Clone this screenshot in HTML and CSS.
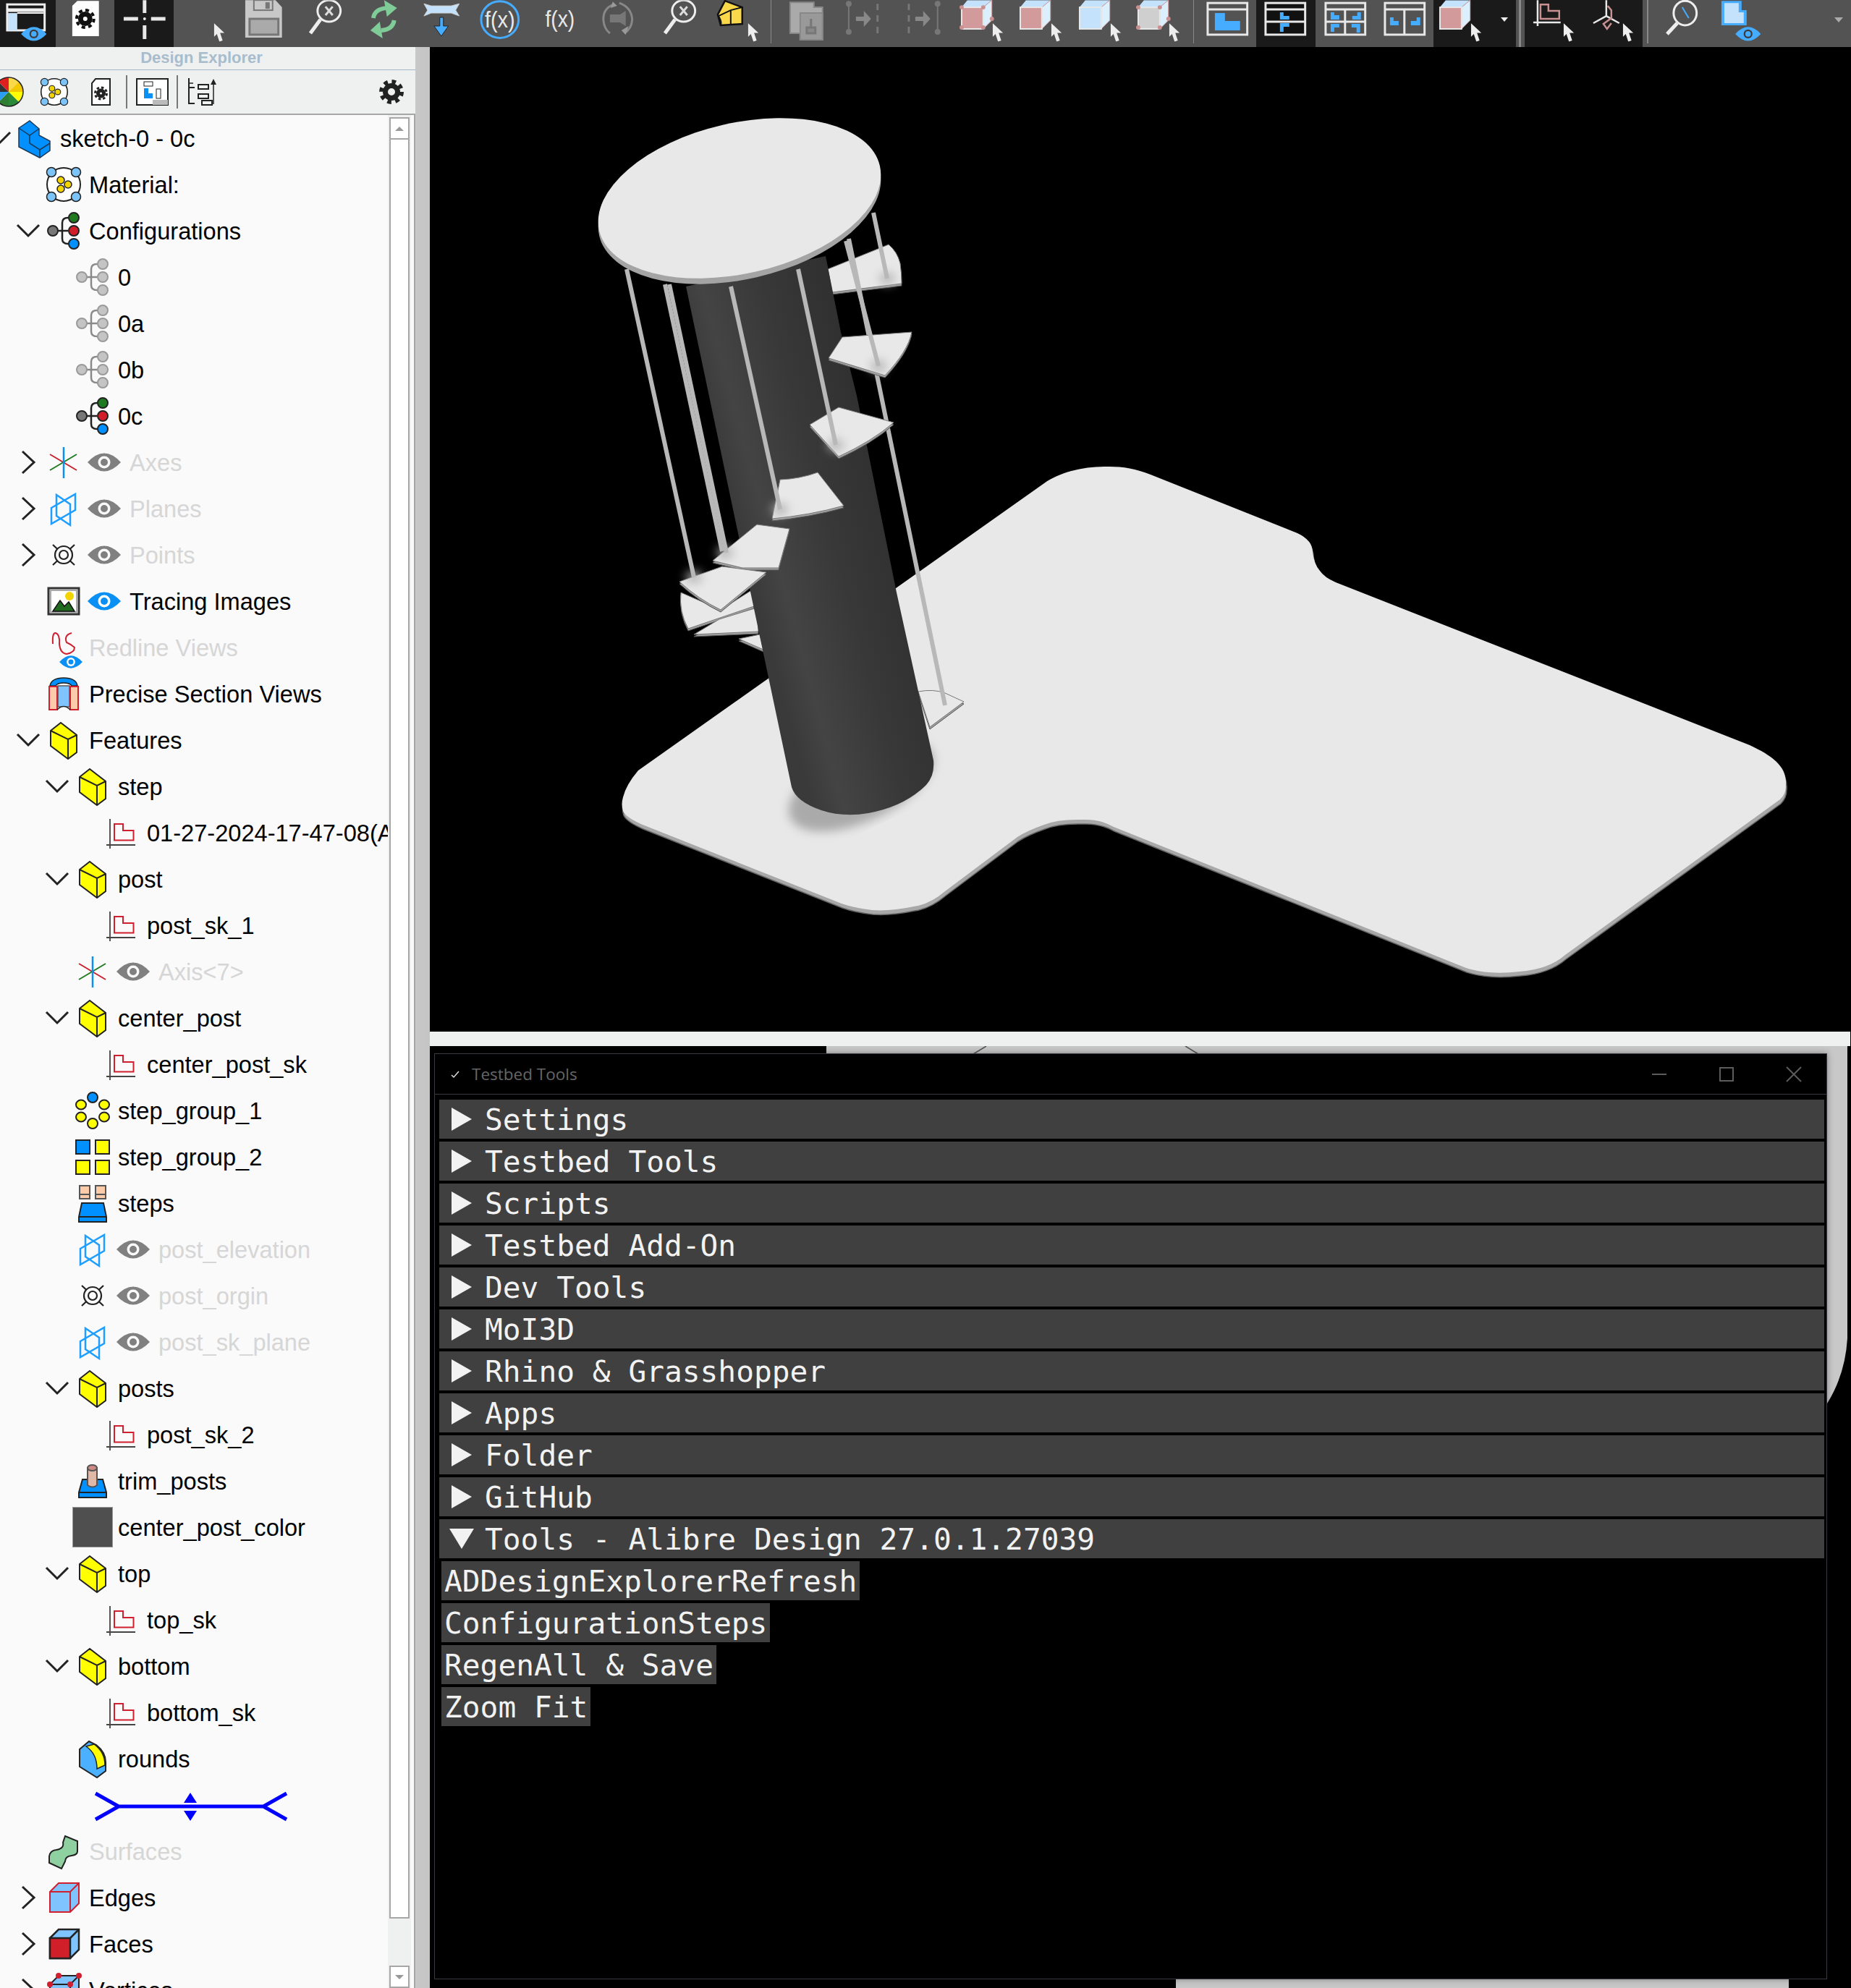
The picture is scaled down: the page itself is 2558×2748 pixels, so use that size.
FILE: index.html
```html
<!DOCTYPE html>
<html lang="en">
<head>
    <meta charset="UTF-8">
    <title>Alibre Design - Testbed Tools</title>
    <link rel="stylesheet" href="styles.css">
</head>
<body>
    <!-- Shared icons -->
    <svg class="defs" width="0" height="0">
        <defs>
            <linearGradient id="post-grad" gradientUnits="userSpaceOnUse" x1="1010" y1="700" x2="1230" y2="640">
                <stop offset="0" stop-color="#3a3a3a"/>
                <stop offset="0.18" stop-color="#444444"/>
                <stop offset="0.55" stop-color="#383838"/>
                <stop offset="1" stop-color="#2f2f2f"/>
            </linearGradient>
            <filter id="soft"><feGaussianBlur stdDeviation="7"/></filter>
            <path id="plate" d="M1443 668C1465 652 1500 644 1533 645 1552 645 1570 648 1590 656L1793 737Q1814 747 1814 763 1816 780 1824 789 1830 798 1846 805L2418 1030C2450 1045 2470 1060 2468 1085 2468 1095 2465 1100 2460 1105L2163 1320Q2140 1340 2100 1343 2056 1348 2026 1338L1539 1143Q1520 1132 1496 1133 1462 1132 1443 1140 1420 1148 1406 1157L1306 1232Q1285 1250 1263 1253 1230 1260 1205 1258 1180 1255 1163 1249L888 1140Q865 1130 861 1121 858 1112 861 1102 865 1085 882 1065Z"/>
            <g id="steps-back">
                <path d="M1269 956Q1290 952 1306 958L1332 970 1285 1005Z"/>
                <path d="M1021 883L1050 877 1055 898Z"/>
                <path d="M959 877L994 856 1046 840 1048 873Z"/>
                <path d="M941 819Q938 845 951 869L1042 838 1040 815 996 843Z"/>
                <path d="M1144 372L1228 338Q1240 348 1244 364 1246 378 1246 392L1150 404Z"/>
            </g>
            <g id="steps-front">
                <path d="M1145 495L1164 466 1260 459Q1255 485 1223 519Z"/>
                <path d="M1119 587L1159 563 1235 584Q1205 610 1159 631Z"/>
                <path d="M1067 717L1078 663Q1105 662 1130 653L1166 699Q1120 712 1067 717Z"/>
                <path d="M985 775L1046 725 1091 731 1076 785 1026 785Z"/>
                <path d="M939 804L998 783 1059 791 996 843Q965 828 939 804Z"/>
            </g>
        </defs>
        <symbol id="cur" viewBox="0 0 16 26"><path d="M0 0V19L4 15 7.500 25.500 12 24 8.500 13.500H14.500Z" fill="#eee"/></symbol>
        <symbol id="chev-down" viewBox="0 0 40 40"><path d="M5 12L20 27 35 12" fill="none" stroke="#222" stroke-width="3"/></symbol>
        <symbol id="chev-right" viewBox="0 0 40 40"><path d="M12 5L28 20 12 35" fill="none" stroke="#222" stroke-width="3"/></symbol>
        <symbol id="eye-gray" viewBox="0 0 46 26"><path d="M0 13Q23-12 46 13 23 38 0 13Z" fill="#808080"/><circle cx="23" cy="13" r="8.500" fill="#fafafa"/><circle cx="23" cy="13" r="5" fill="#808080"/></symbol>
        <symbol id="eye-blue" viewBox="0 0 46 26"><path d="M0 13Q23-12 46 13 23 38 0 13Z" fill="#0a90f5"/><circle cx="23" cy="13" r="8.500" fill="#fff"/><circle cx="23" cy="13" r="5" fill="#0a90f5"/></symbol>
        <symbol id="eye-tb" viewBox="0 0 46 26"><path d="M0 13Q23-12 46 13 23 38 0 13Z" fill="#45acff"/><ellipse cx="23" cy="13" rx="8" ry="8" fill="#3c3c3c"/><ellipse cx="23" cy="13" rx="5" ry="5" fill="#45acff"/></symbol>

        <symbol id="i-part" viewBox="0 0 58 58"><path d="M7 15L22 5 35 16V25L50 33V46L36 56 7 41Z" fill="#0090ff" stroke="#1c3a58" stroke-width="1.500"/><path d="M7 15L22 25 35 16M22 25V36L36 45 50 36M36 45V56" fill="none" stroke="#1c3a58" stroke-width="1.500"/></symbol>
        <symbol id="i-material" viewBox="0 0 58 58"><circle cx="29" cy="29" r="23" fill="#fff" stroke="#222" stroke-width="2"/><g fill="#7cc4f8" stroke="#222" stroke-width="1.500"><circle cx="12" cy="12" r="6.500"/><circle cx="46" cy="12" r="6.500"/><circle cx="12" cy="46" r="6.500"/><circle cx="46" cy="46" r="6.500"/></g><g fill="#f3d400" stroke="#222" stroke-width="1.500"><circle cx="25" cy="23" r="5"/><circle cx="35" cy="29" r="5"/><circle cx="25" cy="35" r="5"/></g></symbol>
        <symbol id="i-config" viewBox="0 0 58 58"><path d="M14 29H35M43 11H35Q27 11 27 18V40Q27 47 35 47H43" fill="none" stroke="#222" stroke-width="2.500"/><ellipse cx="14" cy="29" rx="7" ry="7" fill="#777" stroke="#222" stroke-width="2"/><ellipse cx="43" cy="11" rx="7" ry="7" fill="#1f7a1f" stroke="#222" stroke-width="2"/><ellipse cx="43" cy="29" rx="7" ry="7" fill="#d01f28" stroke="#222" stroke-width="2"/><ellipse cx="43" cy="47" rx="7" ry="7" fill="#0090ff" stroke="#222" stroke-width="2"/></symbol>
        <symbol id="i-config-off" viewBox="0 0 58 58"><path d="M14 29H35M43 11H35Q27 11 27 18V40Q27 47 35 47H43" fill="none" stroke="#8a8a8a" stroke-width="2.500"/><g fill="#c4c4c4" stroke="#9a9a9a" stroke-width="2"><ellipse cx="14" cy="29" rx="7" ry="7"/><ellipse cx="43" cy="11" rx="7" ry="7"/><ellipse cx="43" cy="29" rx="7" ry="7"/><ellipse cx="43" cy="47" rx="7" ry="7"/></g></symbol>
        <symbol id="i-axes" viewBox="0 0 58 58"><path d="M10 18L47 40" stroke="#c8202c" stroke-width="2"/><path d="M10 40L47 18" stroke="#1f7a1f" stroke-width="2"/><path d="M29 8V51" stroke="#0a90f5" stroke-width="2.500"/></symbol>
        <symbol id="i-planes" viewBox="0 0 58 58"><g fill="none" stroke="#1e9fff" stroke-width="2.500"><path d="M12 28L45 9V31L12 50Z"/><path d="M19 10L38 23V52L19 39Z"/></g></symbol>
        <symbol id="i-origin" viewBox="0 0 58 58"><g fill="none" stroke="#222" stroke-width="2.200"><path d="M14 15L44 43M44 15L14 43"/><circle cx="29" cy="29" r="12" fill="#fafafa"/><circle cx="29" cy="29" r="6"/></g></symbol>
        <symbol id="i-image" viewBox="0 0 58 58"><rect x="8" y="11" width="42" height="36" fill="#fff" stroke="#333" stroke-width="3"/><rect x="11" y="14" width="36" height="30" fill="none" stroke="#aaa" stroke-width="2"/><circle cx="37" cy="22" r="6" fill="#f3d400"/><path d="M14 43L24 28 30 36 36 30 44 43Z" fill="#1f6a1f" stroke="#111" stroke-width="1.500"/></symbol>
        <symbol id="i-redline" viewBox="0 0 58 58"><path d="M14 24Q13 8 18 9 24 11 23 24 24 37 33 38 44 36 44 29 38 24 33 22 29 12 40 9" fill="none" stroke="#d02030" stroke-width="2"/><use href="#eye-blue" x="23" y="40" width="32" height="18"/></symbol>
        <symbol id="i-section" viewBox="0 0 58 58"><path d="M10 18Q12 7 29 7 46 7 48 18H40Q38 14 29 14 20 14 18 18Z" fill="#0090ff" stroke="#222" stroke-width="1.500"/><path d="M21 18H37V47H21Z" fill="#80c4ff" stroke="#555" stroke-width="1.500"/><path d="M9 19H20V51H9ZM38 19H49V51H38Z" fill="#fccbaa" stroke="#d02030" stroke-width="2"/><path d="M20 51Q29 42 38 51" fill="#fff" stroke="#222" stroke-width="1.500"/></symbol>
        <symbol id="i-feature" viewBox="0 0 58 58"><path d="M11 16L25 5 47 22V46L35 55 11 37Z" fill="#ff0" stroke="#222" stroke-width="2"/><path d="M11 16L35 28 47 22M35 28V55" fill="none" stroke="#222" stroke-width="2"/></symbol>
        <symbol id="i-sketch" viewBox="0 0 58 58"><path d="M13 10V51M8 46H48" stroke="#444" stroke-width="1.800"/><path d="M19 17H31V26H45.500V39.500H19Z" fill="none" stroke="#d02030" stroke-width="2"/></symbol>
        <symbol id="i-pat-circle" viewBox="0 0 58 58"><g fill="#ff0" stroke="#222" stroke-width="2"><ellipse cx="29" cy="11" rx="7" ry="7" fill="#0090ff"/><ellipse cx="13" cy="21" rx="7" ry="6.500"/><ellipse cx="45" cy="21" rx="7" ry="6.500"/><ellipse cx="13" cy="38" rx="7" ry="6.500"/><ellipse cx="45" cy="38" rx="7" ry="6.500"/><ellipse cx="29" cy="47" rx="7" ry="7"/></g></symbol>
        <symbol id="i-pat-rect" viewBox="0 0 58 58"><g fill="#ff0" stroke="#222" stroke-width="2"><rect x="6" y="6" width="19" height="19" fill="#0090ff"/><rect x="33" y="6" width="19" height="19"/><rect x="6" y="34" width="19" height="19"/><rect x="33" y="34" width="19" height="19"/></g></symbol>
        <symbol id="i-steps" viewBox="0 0 58 58"><g fill="#fccbaa" stroke="#555" stroke-width="2"><rect x="11" y="5" width="14" height="18"/><rect x="33" y="5" width="14" height="18"/></g><path d="M11 17H25M33 17H47" stroke="#555" stroke-width="2"/><path d="M14 29H44L48 48V55H10V48Z" fill="#0090ff" stroke="#222" stroke-width="2"/><path d="M10 48H48" stroke="#222" stroke-width="2"/></symbol>
        <symbol id="i-trim" viewBox="0 0 58 58"><path d="M15 27H43L48 45V52H10V45Z" fill="#0090ff" stroke="#222" stroke-width="2"/><path d="M10 45H48" stroke="#222" stroke-width="2"/><path d="M22 11V35Q29 40 35 35V11Z" fill="#e0b8a8" stroke="#555" stroke-width="2"/><ellipse cx="28.500" cy="11" rx="6.500" ry="4" fill="#d08a86" stroke="#555" stroke-width="2"/></symbol>
        <symbol id="i-round" viewBox="0 0 58 58"><path d="M11 16L24 5 34 10Q47 20 47 34V46L35 55 11 40Z" fill="#4ab0ff" stroke="#222" stroke-width="2"/><path d="M20 12L31 9Q46 20 46 38L35 43Q35 22 20 12Z" fill="#ff0" stroke="#222" stroke-width="1.500"/></symbol>
        <symbol id="i-surface" viewBox="0 0 58 58"><path d="M31 8L48 15V29Q48 34 40 35 31 36 31 43L26 53 9 45V36Q10 28 19 27 30 25 28 17Z" fill="#8fd0a0" stroke="#222" stroke-width="2"/></symbol>
        <symbol id="i-edges" viewBox="0 0 58 58"><path d="M10 21L22 9H50V37L38 49H10Z" fill="#80c4ff" stroke="#d02030" stroke-width="2"/><path d="M10 21H38V49M38 21L50 9" fill="none" stroke="#d02030" stroke-width="2"/></symbol>
        <symbol id="i-faces" viewBox="0 0 58 58"><path d="M10 21L22 9H50V37L38 49H10Z" fill="#80c4ff" stroke="#222" stroke-width="2.500"/><path d="M10 21H38V49H10Z" fill="#d01f28" stroke="#222" stroke-width="2.500"/><path d="M38 21L50 9" stroke="#222" stroke-width="2.500"/></symbol>
        <symbol id="i-vertices" viewBox="0 0 58 58"><path d="M10 21L22 9H50V37L38 49H10Z" fill="#80c4ff" stroke="#222" stroke-width="2"/><path d="M10 21H38V49M38 21L50 9" fill="none" stroke="#222" stroke-width="2"/><g fill="#d02030"><circle cx="22" cy="9" r="4"/><circle cx="50" cy="9" r="4"/><circle cx="10" cy="21" r="4"/><circle cx="38" cy="21" r="4"/></g></symbol>

        <symbol id="t-mag" viewBox="0 0 82 65"><ellipse cx="52" cy="15" rx="16" ry="15" fill="none" stroke="#eee" stroke-width="3"/><path d="M40 27L26 46" stroke="#eee" stroke-width="5"/><path d="M47 9L57 21M57 9L47 21" stroke="#ddd" stroke-width="3"/></symbol>
        <symbol id="t-box" viewBox="0 0 82 65"><path d="M9 10L17 0H51L39 10Z" fill="#c4e2fb"/><path d="M39 10L51 0V28L39 40Z" fill="#dceffd" stroke="#d09a9a"/><rect x="9" y="10" width="30" height="30" fill="currentColor" stroke="#e8e8e8" stroke-width="2"/></symbol>
        <symbol id="t-dots" viewBox="0 0 82 65"><g fill="#c89090"><circle cx="9" cy="10" r="3"/><circle cx="39" cy="10" r="3"/><circle cx="51" cy="26" r="3"/><circle cx="9" cy="38" r="3"/><circle cx="39" cy="38" r="3"/></g></symbol>
    </svg>

    <!-- Top toolbar -->
    <div class="toolbar">
        <svg class="tb tb-on tb-first" viewBox="0 0 82 65"><rect x="15" y="6" width="52" height="36" fill="none" stroke="#eee" stroke-width="3"/><path d="M15 14H67" stroke="#eee" stroke-width="5"/><rect x="16" y="18" width="13" height="24" fill="#c4e2fb"/><path d="M29 18H66" stroke="#eee" stroke-width="2"/><use href="#eye-tb" x="34" y="37" width="36" height="20"/></svg>
        <svg class="tb" viewBox="0 0 82 65"><path d="M23 8L30 1H60V50H23Z" fill="#fff"/><circle cx="41" cy="26" r="6.500" fill="none" stroke="#111" stroke-width="7"/><circle cx="41" cy="26" r="12" fill="none" stroke="#111" stroke-width="4" stroke-dasharray="5 4.400"/></svg>
        <svg class="tb tb-on" viewBox="0 0 82 65"><path d="M42 0V18M42 35V54M13 26H33M51 26H71" stroke="#e8e8e8" stroke-width="5"/><circle cx="42" cy="26" r="2" fill="#e8e8e8"/></svg>
        <svg class="tb" viewBox="0 0 82 65"><use href="#cur" x="56" y="32" width="16" height="26"/></svg>
        <svg class="tb" viewBox="0 0 82 65"><path d="M18 0H60L69 10V52H18Z" fill="#c8c8c8"/><rect x="30" y="0" width="26" height="14" fill="#c8c8c8" stroke="#777" stroke-width="2"/><rect x="46" y="3" width="6" height="9" fill="#777"/><rect x="24" y="26" width="40" height="22" fill="#aaa" stroke="#777" stroke-width="3"/></svg>
        <svg class="tb" viewBox="0 0 82 65"><use href="#t-mag"/></svg>
        <svg class="tb" viewBox="0 0 82 65"><g fill="#80cc99"><path d="M46 0L64 11 50 23Z"/><path d="M44 53L27 42 40 30Z"/></g><g fill="none" stroke="#80cc99" stroke-width="6"><path d="M31 25Q33 12 50 11"/><path d="M60 28Q58 41 42 42"/></g></svg>
        <svg class="tb" viewBox="0 0 82 65"><path d="M20 5L30 8H58L69 5 64 14 69 22 58 18H30L20 22 25 14Z" fill="#c4e2fb" stroke="#ccc"/><path d="M42 24H47V36H54L44 50 34 36H42Z" fill="#45acff" stroke="#222"/></svg>
        <svg class="tb" viewBox="0 0 82 65"><ellipse cx="43" cy="27" rx="26" ry="25.500" fill="none" stroke="#45acff" stroke-width="3"/><text class="fx" x="43" y="38" text-anchor="middle" textLength="42" lengthAdjust="spacingAndGlyphs">f(x)</text></svg>
        <svg class="tb" viewBox="0 0 82 65"><text class="fx" x="45" y="37" text-anchor="middle" textLength="41" lengthAdjust="spacingAndGlyphs">f(x)</text></svg>
        <svg class="tb" viewBox="0 0 82 65"><g fill="none" stroke="#888" stroke-width="3"><path d="M37 6Q22 12 23 28 24 40 32 46"/><path d="M45 4Q62 10 63 27 62 40 52 46"/></g><path d="M32 20H46L54 15V36L46 31H32Z" fill="#777"/><path d="M58 36L54 48 48 42ZM36 2L42 8 33 11Z" fill="#999"/></svg>
        <svg class="tb" viewBox="0 0 82 65"><use href="#t-mag"/></svg>
        <svg class="tb" viewBox="0 0 82 65"><path d="M18 20L28 1 52 10V33L22 35Z" fill="#fbd84a" stroke="#111" stroke-width="2.500"/><path d="M19 22L36 14 52 10M36 14L36 34M19 22Q24 30 22 35" fill="none" stroke="#111" stroke-width="2"/><use href="#cur" x="60" y="32" width="16" height="26"/></svg>
        <div class="tb-sep"></div>
        <svg class="tb" viewBox="0 0 82 65"><g fill="#aaa" stroke="#888" stroke-width="2"><path d="M17 3H50V10H62V55H31V46H17Z"/><path d="M31 18H62V55H31Z" fill="#999"/></g><path d="M46 26V38M40 38H52V46H40Z" fill="#888" stroke="#777" stroke-width="3"/></svg>
        <svg class="tb" viewBox="0 0 82 65"><path d="M17 5V46" stroke="#777" stroke-width="2"/><path d="M57 5V46" stroke="#777" stroke-width="3" stroke-dasharray="9 7"/><circle cx="17" cy="5" r="4" fill="#777"/><circle cx="17" cy="44" r="4" fill="#777"/><path d="M27 23H38V15L48 26 38 37V29H27Z" fill="#888"/></svg>
        <svg class="tb" viewBox="0 0 82 65"><path d="M18 5V46" stroke="#777" stroke-width="3" stroke-dasharray="9 7"/><path d="M58 5V46" stroke="#777" stroke-width="2"/><circle cx="58" cy="5" r="4" fill="#777"/><circle cx="58" cy="44" r="4" fill="#777"/><path d="M27 23H38V15L48 26 38 37V29H27Z" fill="#888"/></svg>
        <svg class="tb tb-pink" viewBox="0 0 82 65"><use href="#t-box"/><use href="#t-dots"/><use href="#cur" x="52" y="32" width="16" height="26"/></svg>
        <svg class="tb tb-pink" viewBox="0 0 82 65"><use href="#t-box"/><use href="#cur" x="52" y="32" width="16" height="26"/></svg>
        <svg class="tb tb-ice" viewBox="0 0 82 65"><use href="#t-box"/><use href="#cur" x="52" y="32" width="16" height="26"/></svg>
        <svg class="tb tb-gray" viewBox="0 0 82 65"><use href="#t-box"/><use href="#t-dots"/><use href="#cur" x="52" y="32" width="16" height="26"/></svg>
        <div class="tb-sep tb-sep-thin"></div>
        <svg class="tb" viewBox="0 0 82 65"><rect x="14" y="4" width="55" height="44" fill="none" stroke="#e8e8e8" stroke-width="3"/><path d="M14 13H69" stroke="#e8e8e8" stroke-width="3"/><path d="M24 18H38V29H59V42H24Z" fill="#45acff"/></svg>
        <svg class="tb tb-on" viewBox="0 0 82 65"><rect x="13" y="4" width="55" height="44" fill="#111" stroke="#e8e8e8" stroke-width="3"/><path d="M13 13H68M13 30H68" stroke="#e8e8e8" stroke-width="3"/><path d="M33 17H38V22H46V27H33ZM33 32H46V37H38V44H33Z" fill="#45acff"/></svg>
        <svg class="tb" viewBox="0 0 82 65"><rect x="14" y="4" width="55" height="44" fill="none" stroke="#e8e8e8" stroke-width="3"/><path d="M14 13H69M14 30H69M41 13V48" stroke="#e8e8e8" stroke-width="3"/><path d="M21 17H26V21H33V27H21ZM51 27H63V17H58V22H51ZM21 33H33V38H26V44H21ZM50 33H62V45H57V38H50Z" fill="#45acff"/></svg>
        <svg class="tb" viewBox="0 0 82 65"><rect x="14" y="4" width="55" height="44" fill="none" stroke="#e8e8e8" stroke-width="3"/><path d="M14 13H69M41 13V48" stroke="#e8e8e8" stroke-width="3"/><path d="M21 24H26V29H33V35H21ZM50 35H63V24H58V29H50Z" fill="#45acff"/></svg>
        <svg class="tb tb-on tb-pink" viewBox="0 0 82 65"><use href="#t-box"/><use href="#cur" x="52" y="32" width="16" height="26"/></svg>
        <div class="tb-drop tb-on"><div class="tb-arrow"></div></div>
        <div class="tb-sep tb-sep-fat"></div>
        <svg class="tb tb-on" viewBox="0 0 82 65"><path d="M18 0V36M12 31H50" stroke="#e8e8e8" stroke-width="2.500"/><path d="M22 6H33V15H48V26H22Z" fill="none" stroke="#c89090" stroke-width="2.500"/><use href="#cur" x="54" y="32" width="16" height="26"/></svg>
        <svg class="tb tb-on" viewBox="0 0 82 65"><path d="M32 0V22M32 22L14 32M32 22L50 32" fill="none" stroke="#e8e8e8" stroke-width="2.500"/><path d="M34 8L39 14V25L28 33 33 40 39 32" fill="none" stroke="#c89090" stroke-width="2.500"/><use href="#cur" x="55" y="32" width="16" height="26"/></svg>
        <div class="tb-sep tb-sep-mid"></div>
        <svg class="tb" viewBox="0 0 82 65"><ellipse cx="47" cy="18" rx="16" ry="17" fill="none" stroke="#eee" stroke-width="3"/><path d="M36 32L22 47" stroke="#eee" stroke-width="5"/><path d="M43 10L52 25" stroke="#45acff" stroke-width="2"/></svg>
        <svg class="tb" viewBox="0 0 82 65"><path d="M15 1H43V14H50V35H15Z" fill="#45acff"/><path d="M19 4H39V17H46V32H19Z" fill="#c4e2fb"/><use href="#eye-tb" x="34" y="37" width="36" height="20"/></svg>
        <div class="tb-end"><div class="tb-arrow tb-arrow-gray"></div></div>
    </div>

    <div class="app-container">
        <!-- Design Explorer -->
        <div class="sidebar">
            <div class="panel">
                <div class="de-title">Design Explorer</div>
                <div class="de-tools">
                    <svg class="de-wheel" width="42" height="42" viewBox="0 0 42 42"><path d="M21 21L21 1A20 20 0 0 1 35 7Z" fill="#fbd84a"/><path d="M21 21L35 7A20 20 0 0 1 41 21Z" fill="#f3c800"/><path d="M21 21L41 21A20 20 0 0 1 35 35Z" fill="#ff0"/><path d="M21 21L35 35A20 20 0 0 1 21 41Z" fill="#2a8a3a"/><path d="M21 21L21 41A20 20 0 0 1 7 35Z" fill="#2f7d32"/><path d="M21 21L7 35A20 20 0 0 1 1 21Z" fill="#2a9df4"/><path d="M21 21L1 21A20 20 0 0 1 7 7Z" fill="#333"/><path d="M21 21L7 7A20 20 0 0 1 21 1Z" fill="#e02020"/><circle cx="21" cy="21" r="20" fill="none" stroke="#222" stroke-width="1.500"/></svg>
                    <svg class="de-material" width="46" height="46" viewBox="0 0 58 58"><use href="#i-material"/></svg>
                    <svg class="de-doc" width="27" height="38" viewBox="0 0 27 38"><path d="M6 1H26V37H1V7Z" fill="#fff" stroke="#222" stroke-width="2"/><circle cx="13.500" cy="21" r="4" fill="none" stroke="#222" stroke-width="5"/><circle cx="13.500" cy="21" r="8" fill="none" stroke="#222" stroke-width="3" stroke-dasharray="3.500 2.800"/></svg>
                    <div class="de-sep"></div>
                    <svg class="de-layout" width="45" height="38" viewBox="0 0 45 38"><rect x="1" y="1" width="43" height="36" fill="#fff" stroke="#222" stroke-width="2"/><rect x="11" y="5" width="12" height="6" fill="none" stroke="#222"/><path d="M11 14H17V21H23V28H11Z" fill="#0a90f5"/><rect x="28" y="15" width="6" height="13" fill="none" stroke="#222"/><rect x="23" y="30" width="21" height="7" fill="#bbb"/></svg>
                    <div class="de-sep"></div>
                    <svg class="de-tree" width="42" height="40" viewBox="0 0 42 40"><g fill="none" stroke="#222" stroke-width="2"><path d="M2 1V36H10M2 14H10"/><rect x="15" y="10" width="14" height="6"/><rect x="15" y="23" width="14" height="6"/><rect x="20" y="32" width="14" height="6"/></g><path d="M2 8H8M36 6V37" stroke="#222" stroke-width="1.500"/><path d="M32 10L36 2 40 10Z" fill="#222"/></svg>
                    <svg class="de-gear" width="36" height="36" viewBox="0 0 36 36"><circle cx="18" cy="18" r="8.500" fill="none" stroke="#222" stroke-width="7"/><circle cx="18" cy="18" r="14" fill="none" stroke="#222" stroke-width="6" stroke-dasharray="5.500 5.500"/></svg>
                </div>
                <div class="tree-wrap">
                    <div class="tree">
                        <div class="row lv0"><svg class="chev"><use href="#chev-down"/></svg><svg class="ico"><use href="#i-part"/></svg><span class="lbl">sketch-0 - 0c</span></div>
                        <div class="row lv1"><span class="chev"></span><svg class="ico"><use href="#i-material"/></svg><span class="lbl">Material:</span></div>
                        <div class="row lv1"><svg class="chev"><use href="#chev-down"/></svg><svg class="ico"><use href="#i-config"/></svg><span class="lbl">Configurations</span></div>
                        <div class="row lv2"><span class="chev"></span><svg class="ico"><use href="#i-config-off"/></svg><span class="lbl">0</span></div>
                        <div class="row lv2"><span class="chev"></span><svg class="ico"><use href="#i-config-off"/></svg><span class="lbl">0a</span></div>
                        <div class="row lv2"><span class="chev"></span><svg class="ico"><use href="#i-config-off"/></svg><span class="lbl">0b</span></div>
                        <div class="row lv2"><span class="chev"></span><svg class="ico"><use href="#i-config"/></svg><span class="lbl">0c</span></div>
                        <div class="row lv1"><svg class="chev"><use href="#chev-right"/></svg><svg class="ico"><use href="#i-axes"/></svg><svg class="eye"><use href="#eye-gray"/></svg><span class="lbl off">Axes</span></div>
                        <div class="row lv1"><svg class="chev"><use href="#chev-right"/></svg><svg class="ico"><use href="#i-planes"/></svg><svg class="eye"><use href="#eye-gray"/></svg><span class="lbl off">Planes</span></div>
                        <div class="row lv1"><svg class="chev"><use href="#chev-right"/></svg><svg class="ico"><use href="#i-origin"/></svg><svg class="eye"><use href="#eye-gray"/></svg><span class="lbl off">Points</span></div>
                        <div class="row lv1"><span class="chev"></span><svg class="ico"><use href="#i-image"/></svg><svg class="eye"><use href="#eye-blue"/></svg><span class="lbl">Tracing Images</span></div>
                        <div class="row lv1"><span class="chev"></span><svg class="ico"><use href="#i-redline"/></svg><span class="lbl off">Redline Views</span></div>
                        <div class="row lv1"><span class="chev"></span><svg class="ico"><use href="#i-section"/></svg><span class="lbl">Precise Section Views</span></div>
                        <div class="row lv1"><svg class="chev"><use href="#chev-down"/></svg><svg class="ico"><use href="#i-feature"/></svg><span class="lbl">Features</span></div>
                        <div class="row lv2"><svg class="chev"><use href="#chev-down"/></svg><svg class="ico"><use href="#i-feature"/></svg><span class="lbl">step</span></div>
                        <div class="row lv3"><span class="chev"></span><svg class="ico"><use href="#i-sketch"/></svg><span class="lbl">01-27-2024-17-47-08(A</span></div>
                        <div class="row lv2"><svg class="chev"><use href="#chev-down"/></svg><svg class="ico"><use href="#i-feature"/></svg><span class="lbl">post</span></div>
                        <div class="row lv3"><span class="chev"></span><svg class="ico"><use href="#i-sketch"/></svg><span class="lbl">post_sk_1</span></div>
                        <div class="row lv2"><span class="chev"></span><svg class="ico"><use href="#i-axes"/></svg><svg class="eye"><use href="#eye-gray"/></svg><span class="lbl off">Axis&lt;7&gt;</span></div>
                        <div class="row lv2"><svg class="chev"><use href="#chev-down"/></svg><svg class="ico"><use href="#i-feature"/></svg><span class="lbl">center_post</span></div>
                        <div class="row lv3"><span class="chev"></span><svg class="ico"><use href="#i-sketch"/></svg><span class="lbl">center_post_sk</span></div>
                        <div class="row lv2"><span class="chev"></span><svg class="ico"><use href="#i-pat-circle"/></svg><span class="lbl">step_group_1</span></div>
                        <div class="row lv2"><span class="chev"></span><svg class="ico"><use href="#i-pat-rect"/></svg><span class="lbl">step_group_2</span></div>
                        <div class="row lv2"><span class="chev"></span><svg class="ico"><use href="#i-steps"/></svg><span class="lbl">steps</span></div>
                        <div class="row lv2"><span class="chev"></span><svg class="ico"><use href="#i-planes"/></svg><svg class="eye"><use href="#eye-gray"/></svg><span class="lbl off">post_elevation</span></div>
                        <div class="row lv2"><span class="chev"></span><svg class="ico"><use href="#i-origin"/></svg><svg class="eye"><use href="#eye-gray"/></svg><span class="lbl off">post_orgin</span></div>
                        <div class="row lv2"><span class="chev"></span><svg class="ico"><use href="#i-planes"/></svg><svg class="eye"><use href="#eye-gray"/></svg><span class="lbl off">post_sk_plane</span></div>
                        <div class="row lv2"><svg class="chev"><use href="#chev-down"/></svg><svg class="ico"><use href="#i-feature"/></svg><span class="lbl">posts</span></div>
                        <div class="row lv3"><span class="chev"></span><svg class="ico"><use href="#i-sketch"/></svg><span class="lbl">post_sk_2</span></div>
                        <div class="row lv2"><span class="chev"></span><svg class="ico"><use href="#i-trim"/></svg><span class="lbl">trim_posts</span></div>
                        <div class="row lv2"><span class="chev"></span><span class="swatch"></span><span class="lbl">center_post_color</span></div>
                        <div class="row lv2"><svg class="chev"><use href="#chev-down"/></svg><svg class="ico"><use href="#i-feature"/></svg><span class="lbl">top</span></div>
                        <div class="row lv3"><span class="chev"></span><svg class="ico"><use href="#i-sketch"/></svg><span class="lbl">top_sk</span></div>
                        <div class="row lv2"><svg class="chev"><use href="#chev-down"/></svg><svg class="ico"><use href="#i-feature"/></svg><span class="lbl">bottom</span></div>
                        <div class="row lv3"><span class="chev"></span><svg class="ico"><use href="#i-sketch"/></svg><span class="lbl">bottom_sk</span></div>
                        <div class="row lv2"><span class="chev"></span><svg class="ico"><use href="#i-round"/></svg><span class="lbl">rounds</span></div>
                        <div class="row">
                            <svg class="rollback" width="268" height="42" viewBox="0 0 268 42"><path d="M2 3L34 21 2 39M266 3L234 21 266 39M34 21H234" fill="none" stroke="#0000ff" stroke-width="5"/><path d="M133 2L124 16H142ZM124 27H142L133 41Z" fill="#0000ff"/></svg>
                        </div>
                        <div class="row lv1"><span class="chev"></span><svg class="ico"><use href="#i-surface"/></svg><span class="lbl off">Surfaces</span></div>
                        <div class="row lv1"><svg class="chev"><use href="#chev-right"/></svg><svg class="ico"><use href="#i-edges"/></svg><span class="lbl">Edges</span></div>
                        <div class="row lv1"><svg class="chev"><use href="#chev-right"/></svg><svg class="ico"><use href="#i-faces"/></svg><span class="lbl">Faces</span></div>
                        <div class="row lv1"><svg class="chev"><use href="#chev-right"/></svg><svg class="ico"><use href="#i-vertices"/></svg><span class="lbl">Vertices</span></div>
                    </div>
                    <div class="scrollbar">
                        <div class="sb-btn"><div class="sb-up"></div></div>
                        <div class="sb-thumb"></div>
                        <div class="sb-track"></div>
                        <div class="sb-btn"><div class="sb-down"></div></div>
                    </div>
                </div>
            </div>
            <div class="gutter"></div>
        </div>

        <div class="main-content">
            <!-- 3D viewport -->
            <div class="viewport">
                <svg class="model" viewBox="594 65 1964 1361" width="1964" height="1361">
                    <!-- floor plate -->
                    <use href="#plate" x="1" y="6" fill="#a8a8a8" stroke="#666" stroke-width="1.500"/>
                    <use href="#plate" fill="#e8e8e8"/>
                    <ellipse cx="1190" cy="1085" rx="108" ry="50" transform="rotate(-25 1190 1085)" fill="#aaa" filter="url(#soft)"/>
                    <!-- steps behind the post -->
                    <use href="#steps-back" y="3" fill="#a0a0a0" stroke="#555" stroke-width="1"/>
                    <use href="#steps-back" fill="#e8e8e8" stroke="#777" stroke-width="1"/>
                    <!-- long rod -->
                    <path d="M1173 330L1306 975" stroke="#b8b8b8" stroke-width="6"/>
                    <!-- post -->
                    <path fill="url(#post-grad)" d="M948 396L1141 354 1162 459 1184 547 1239 819 1290 1051Q1292 1072 1280 1085 1250 1115 1200 1124 1165 1130 1135 1120 1100 1108 1094 1088Z"/>
                    <!-- steps in front -->
                    <use href="#steps-front" y="3" fill="#a0a0a0" stroke="#555" stroke-width="1"/>
                    <use href="#steps-front" fill="#e8e8e8" stroke="#777" stroke-width="1"/>
                    <g fill="#b4b4b4" filter="url(#soft)">
                        <ellipse cx="1226" cy="385" rx="11" ry="8"/>
                        <ellipse cx="1214" cy="506" rx="11" ry="8"/>
                        <ellipse cx="1155" cy="615" rx="11" ry="8"/>
                        <ellipse cx="1078" cy="704" rx="11" ry="8"/>
                        <ellipse cx="1002" cy="764" rx="11" ry="8"/>
                        <ellipse cx="959" cy="798" rx="11" ry="8"/>
                    </g>
                    <!-- rods -->
                    <g stroke="#b8b8b8" stroke-width="6">
                        <path d="M866 372L959 798"/>
                        <path d="M919 393L998 762"/>
                        <path d="M925 393L1004 764"/>
                        <path d="M1010 396L1078 704"/>
                        <path d="M1103 372L1155 615"/>
                        <path d="M1169 333L1214 506"/>
                        <path d="M1207 294L1226 385"/>
                    </g>
                    <!-- top disc -->
                    <ellipse cx="1022" cy="281" rx="199" ry="105" transform="rotate(-13 1022 281)" fill="#a4a4a4"/>
                    <ellipse cx="1022" cy="274" rx="199" ry="104" transform="rotate(-13 1022 274)" fill="#e8e8e8"/>
                </svg>
            </div>
            <div class="band"></div>
            <!-- Lower area with floating tool window -->
            <div class="lower">
                <svg class="backdrop" viewBox="594 1446 1964 1302" width="1964" height="1302">
                    <path fill="#c8c8c8" d="M1142 1446H2553V1850Q2550 1900 2525 1940V1458H1142Z"/>
                    <path d="M1345 1457L1363 1446M1638 1446L1656 1457" stroke="#555" stroke-width="1.500"/>
                    <rect x="1625" y="2736" width="847" height="12" fill="#c8c8c8"/>
                </svg>
                <div class="win">
                    <div class="win-title">
                        <svg class="win-check" width="12" height="12" viewBox="0 0 12 12"><path d="M1 7L4 10 11 2" fill="none" stroke="#ddd" stroke-width="1.500"/></svg>
                        <span class="win-name">Testbed Tools</span>
                        <svg class="win-btn" width="22" height="22" viewBox="0 0 22 22"><path d="M1 11H21" stroke="#5c5c5c" stroke-width="2"/></svg>
                        <svg class="win-btn" width="22" height="22" viewBox="0 0 22 22"><rect x="2" y="2" width="18" height="18" fill="none" stroke="#5c5c5c" stroke-width="2"/></svg>
                        <svg class="win-btn" width="22" height="22" viewBox="0 0 22 22"><path d="M1 1L21 21M21 1L1 21" stroke="#5c5c5c" stroke-width="2"/></svg>
                    </div>
                    <div class="win-body">
                        <div class="sec"><span class="tri"></span>Settings</div>
                        <div class="sec"><span class="tri"></span>Testbed Tools</div>
                        <div class="sec"><span class="tri"></span>Scripts</div>
                        <div class="sec"><span class="tri"></span>Testbed Add-On</div>
                        <div class="sec"><span class="tri"></span>Dev Tools</div>
                        <div class="sec"><span class="tri"></span>MoI3D</div>
                        <div class="sec"><span class="tri"></span>Rhino &amp; Grasshopper</div>
                        <div class="sec"><span class="tri"></span>Apps</div>
                        <div class="sec"><span class="tri"></span>Folder</div>
                        <div class="sec"><span class="tri"></span>GitHub</div>
                        <div class="sec"><span class="tri-open"></span>Tools - Alibre Design 27.0.1.27039</div>
                        <div class="tool">ADDesignExplorerRefresh</div>
                        <div class="tool">ConfigurationSteps</div>
                        <div class="tool">RegenAll &amp; Save</div>
                        <div class="tool">Zoom Fit</div>
                    </div>
                </div>
            </div>
        </div>
    </div>
</body>
</html>
```
FILE: styles.css
```css
* {
    margin: 0;
    padding: 0;
    box-sizing: border-box;
}

body {
    width: 2558px;
    height: 2748px;
    overflow: hidden;
    background-color: #000000;
    font-family: "Liberation Sans", Arial, sans-serif;
    color: #000000;
}

.defs {
    position: absolute;
}

/* Top toolbar */
.toolbar {
    display: flex;
    height: 65px;
    background-color: #535353;
    overflow: hidden;
}

.tb {
    flex: none;
    display: block;
    width: 81.6px;
    height: 65px;
}

.tb-first {
    margin-left: -5px;
}

.tb-on {
    background-color: #1a1a1a;
}

.tb-pink {
    color: #d29a9a;
}

.tb-ice {
    color: #c4e2fb;
}

.tb-gray {
    color: #cfcfcf;
}

.fx {
    font-family: "Liberation Sans", Arial, sans-serif;
    font-size: 32px;
    fill: #e8e8e8;
}

.tb-sep {
    flex: none;
    width: 19px;
    height: 60px;
    border-left: 1px solid #888888;
    margin-left: 9px;
    margin-right: -9px;
}

.tb-sep-thin {
    width: 9px;
    margin-left: 3px;
    margin-right: -3px;
}

.tb-sep-fat {
    width: 12px;
    margin-left: 4px;
    margin-right: -4px;
    height: 65px;
    border-left: 3px solid #888888;
}

.tb-sep-mid {
    width: 12px;
    margin-left: 6px;
    margin-right: -6px;
    border-left: 2px solid #888888;
}

.tb-drop {
    flex: none;
    width: 32px;
    display: flex;
    justify-content: center;
    padding-top: 24px;
}

.tb-end {
    flex: 1;
    display: flex;
    justify-content: flex-end;
    padding: 24px 11px 0 0;
}

.tb-arrow {
    width: 0;
    height: 0;
    border-left: 5px solid transparent;
    border-right: 5px solid transparent;
    border-top: 6px solid #eeeeee;
}

.tb-arrow-gray {
    border-left-width: 6px;
    border-right-width: 6px;
    border-top: 7px solid #aaaaaa;
}

.app-container {
    display: flex;
    height: 2683px;
}

/* Design Explorer panel */
.sidebar {
    flex: none;
    display: flex;
    width: 594px;
}

.panel {
    width: 574px;
    display: flex;
    flex-direction: column;
    background-color: #eff1f1;
}

.gutter {
    width: 20px;
    background: linear-gradient(to right, #c8c8c8, #c4c4c4);
}

.de-title {
    height: 32px;
    line-height: 30px;
    text-align: center;
    font-size: 22px;
    font-weight: bold;
    color: #a9bccc;
    letter-spacing: 0;
    border-bottom: 1px solid #a4b8c8;
    padding-right: 17px;
}

.de-tools {
    display: flex;
    align-items: center;
    height: 60px;
    flex: none;
    overflow: hidden;
}

.de-wheel {
    margin-left: -9px;
    flex: none;
}

.de-material {
    margin-left: 19px;
}

.de-doc {
    margin-left: 28px;
}

.de-sep {
    width: 2px;
    height: 46px;
    background-color: #777777;
    margin-left: 21px;
}

.de-layout {
    margin-left: 12px;
}

.de-layout + .de-sep {
    margin-left: 11px;
}

.de-tree {
    margin-left: 13px;
}

.de-gear {
    margin-left: auto;
    margin-right: 15px;
}

.tree-wrap {
    flex: 1;
    display: flex;
    min-height: 0;
    background-color: #fafafa;
    border-top: 2px solid #a6a6a6;
    border-right: 2px solid #a6a6a6;
    overflow: hidden;
}

.tree {
    flex: none;
    width: 536px;
    overflow: hidden;
    margin-top: 0;
}

.row {
    display: flex;
    align-items: center;
    height: 64px;
    white-space: nowrap;
}

.lv0 {
    margin-left: -21px;
}

.lv1 {
    padding-left: 19px;
}

.lv2 {
    padding-left: 59px;
}

.lv3 {
    padding-left: 99px;
}

.chev {
    flex: none;
    display: block;
    width: 40px;
    height: 40px;
}

.ico {
    flex: none;
    display: block;
    width: 58px;
    height: 58px;
}

.eye {
    flex: none;
    display: block;
    width: 46px;
    height: 26px;
    margin-left: 4px;
    margin-right: 6px;
}

.lbl {
    margin-left: 6px;
    padding-top: 2px;
    font-size: 32.6px;
}

.off {
    color: #d6d6d6;
}

.swatch {
    flex: none;
    width: 56px;
    height: 56px;
    margin: 0 1px;
    background-color: #4f4f4f;
    border: 1px solid #999999;
}

.rollback {
    margin-left: 130px;
    margin-top: 3px;
}

.scrollbar {
    flex: none;
    width: 32px;
    display: flex;
    flex-direction: column;
    padding: 3px 2px 0;
    background-color: #eff1f1;
}

.sb-btn {
    flex: none;
    height: 31px;
    background-color: #ffffff;
    border: 2px solid #a6a6a6;
    display: flex;
    align-items: center;
    justify-content: center;
}

.sb-thumb {
    flex: none;
    height: 2459px;
    background-color: #ffffff;
    border: 2px solid #a6a6a6;
    border-top: 0;
}

.sb-track {
    flex: 1;
}

.sb-up {
    width: 0;
    height: 0;
    border-left: 6px solid transparent;
    border-right: 6px solid transparent;
    border-bottom: 6px solid #999999;
}

.sb-down {
    width: 0;
    height: 0;
    border-left: 6px solid transparent;
    border-right: 6px solid transparent;
    border-top: 6px solid #999999;
}

.main-content {
    flex: 1;
    display: flex;
    flex-direction: column;
    background-color: #000000;
}

.viewport {
    height: 1361px;
    background-color: #000000;
    flex: none;
}

.model {
    display: block;
}

.band {
    flex: none;
    height: 20px;
    margin-right: 1px;
    background-color: #eff1f1;
}

/* Lower area and tool window */
.lower {
    flex: 1;
    position: relative;
    overflow: hidden;
}

.backdrop {
    position: absolute;
    left: 0;
    top: 0;
}

.win {
    position: absolute;
    left: 6px;
    top: 10px;
    width: 1925px;
    height: 1280px;
    background-color: #000000;
    border: 1px solid #3a3a40;
    box-shadow: 0 0 9px rgba(0, 0, 0, 0.35);
    font-family: "DejaVu Sans Mono", monospace;
}

.win-title {
    display: flex;
    align-items: center;
    height: 56px;
    border-bottom: 1px solid #3a3a40;
    padding: 0 34px 0 22px;
}

.win-check {
    margin-right: 17px;
}

.win-name {
    flex: 1;
    font-family: "Open Sans", sans-serif;
    font-size: 22.5px;
    color: #666666;
}

.win-btn {
    margin-left: 70px;
}

.win-btn + .win-btn {
    margin-left: 71px;
}

.win-body {
    display: flex;
    flex-direction: column;
    gap: 4px;
    padding: 7px 3px 0 6px;
}

.sec {
    display: flex;
    align-items: center;
    height: 54px;
    padding-top: 1px;
    background-color: #404040;
    color: #f2f2f2;
    font-size: 41.2px;
    white-space: pre;
}

.tri {
    flex: none;
    width: 0;
    height: 0;
    margin: -1px 18px 0 17px;
    border-top: 16px solid transparent;
    border-bottom: 16px solid transparent;
    border-left: 28px solid #f2f2f2;
}

.tri-open {
    flex: none;
    width: 0;
    height: 0;
    margin: -1px 15px 0 14px;
    border-left: 17px solid transparent;
    border-right: 17px solid transparent;
    border-top: 28px solid #f2f2f2;
}

.tool {
    align-self: flex-start;
    height: 54px;
    line-height: 56px;
    margin-left: 3px;
    padding: 0 4px;
    background-color: #404040;
    color: #f2f2f2;
    font-size: 41.2px;
    white-space: pre;
}
```
